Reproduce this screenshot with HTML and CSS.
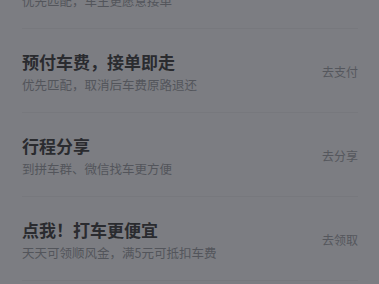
FILE: index.html
```html
<!DOCTYPE html>
<html lang="zh-CN">
<head>
<meta charset="utf-8">
<link rel="stylesheet" href="styles.css">
</head>
<body>
<div class="list">
  <div class="row">
    <div class="info">
      <div class="title">优先匹配，车主更愿意接单</div>
      <div class="sub">优先匹配，车主更愿意接单</div>
    </div>
    <div class="action">去加价</div>
  </div>
  <div class="row">
    <div class="info">
      <div class="title">预付车费，接单即走</div>
      <div class="sub">优先匹配，取消后车费原路退还</div>
    </div>
    <div class="action">去支付</div>
  </div>
  <div class="row">
    <div class="info">
      <div class="title">行程分享</div>
      <div class="sub">到拼车群、微信找车更方便</div>
    </div>
    <div class="action">去分享</div>
  </div>
  <div class="row">
    <div class="info">
      <div class="title">点我！打车更便宜</div>
      <div class="sub">天天可领顺风金，满5元可抵扣车费</div>
    </div>
    <div class="action">去领取</div>
  </div>
</div>
</body>
</html>
```
FILE: styles.css
```css
html, body {
  margin: 0;
  padding: 0;
  background: #7c7d82;
  height: 100%;
  overflow: hidden;
}
body {
  font-family: "Noto Sans CJK SC", "Noto Sans", sans-serif;
}
.list {
  padding: 0 21px 0 22px;
  margin-top: -55px;
}
.row {
  display: flex;
  align-items: center;
  justify-content: space-between;
  padding: 21px 0 18px;
  border-bottom: 1px solid #77787d;
}
.title {
  font-size: 17px;
  font-weight: 700;
  line-height: 24px;
  color: #2a2b2f;
}
.sub {
  margin-top: 2px;
  font-size: 12.5px;
  line-height: 18px;
  color: #53555b;
}
.action {
  font-size: 12px;
  line-height: 18px;
  color: #55575d;
}
.row:first-child .title { visibility: hidden; }
.row:first-child .action { visibility: hidden; }
```
